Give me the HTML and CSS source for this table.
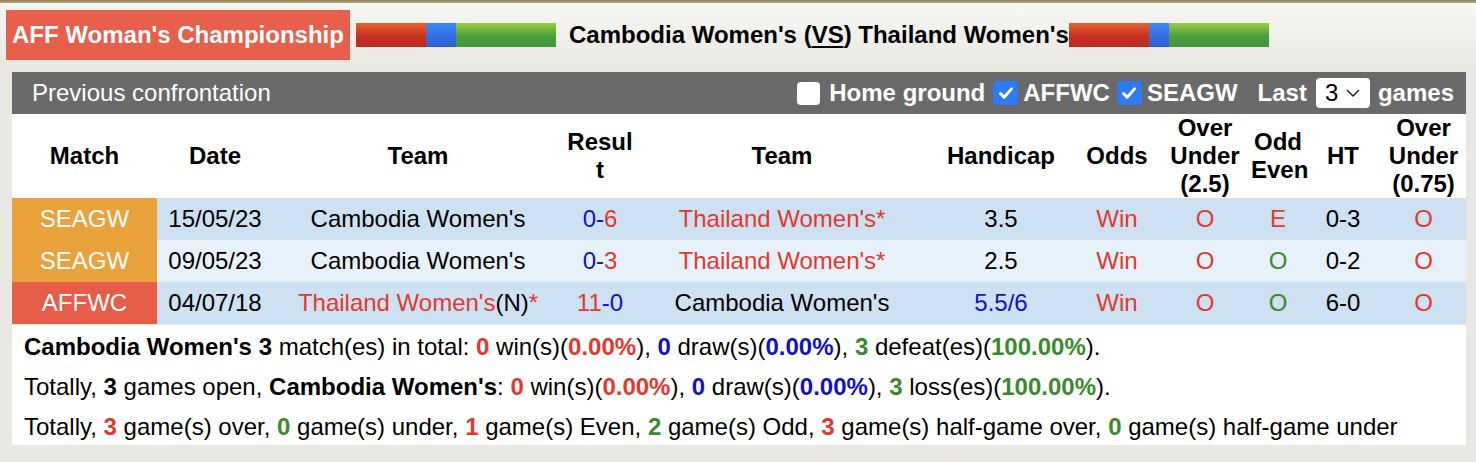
FILE: index.html
```html
<!DOCTYPE html>
<html lang="en">
<head>
<meta charset="utf-8">
<title>Cambodia Women's vs Thailand Women's</title>
<link rel="stylesheet" href="styles.css">
</head>
<body>
<div class="topline"></div>
<div class="title-row">
  <div class="league">AFF Woman's Championship</div>
  <div class="bar"><span class="seg red w70"></span><span class="seg blue w30"></span><span class="seg green w100"></span></div>
  <div class="teams">Cambodia Women's (<u>VS</u>) Thailand Women's</div>
  <div class="bar tight"><span class="seg red w80"></span><span class="seg blue w20"></span><span class="seg green w100"></span></div>
</div>

<div class="panel">
  <div class="panel-head">
    <div class="panel-title">Previous confrontation</div>
    <div class="controls">
      <span class="cb"></span><span class="lbl l-home">Home ground</span>
      <span class="cb on"><svg viewBox="0 0 24 24" width="24" height="24"><path d="M6 12.5l4 4.2L18 7.5" fill="none" stroke="#fff" stroke-width="3.2" stroke-linecap="round" stroke-linejoin="round"/></svg></span><span class="lbl l-aff">AFFWC</span>
      <span class="cb on"><svg viewBox="0 0 24 24" width="24" height="24"><path d="M6 12.5l4 4.2L18 7.5" fill="none" stroke="#fff" stroke-width="3.2" stroke-linecap="round" stroke-linejoin="round"/></svg></span><span class="lbl l-sea">SEAGW</span>
      <span class="lbl l-last">Last</span>
      <span class="select">3<svg viewBox="0 0 14 10" width="14" height="10"><path d="M1 2l6 6 6-6" fill="none" stroke="#222" stroke-width="1.5"/></svg></span>
      <span class="lbl l-games">games</span>
    </div>
  </div>

  <table class="h2h">
    <colgroup>
      <col class="c-match"><col class="c-date"><col class="c-team"><col class="c-res"><col class="c-team"><col class="c-hcp"><col class="c-odds"><col class="c-ou"><col class="c-oe"><col class="c-ht"><col class="c-ou2">
    </colgroup>
    <thead>
      <tr>
        <th>Match</th><th>Date</th><th>Team</th><th><span class="brk">Result</span></th><th>Team</th><th>Handicap</th><th>Odds</th><th>Over Under (2.5)</th><th>Odd Even</th><th>HT</th><th>Over Under (0.75)</th>
      </tr>
    </thead>
    <tbody>
      <tr class="r1">
        <td class="lg sea">SEAGW</td><td>15/05/23</td><td>Cambodia Women's</td><td class="b"><span>0-</span><span class="r">6</span></td><td class="r">Thailand Women's*</td><td>3.5</td><td class="r">Win</td><td class="r">O</td><td class="r">E</td><td>0-3</td><td class="r">O</td>
      </tr>
      <tr class="r2">
        <td class="lg sea">SEAGW</td><td>09/05/23</td><td>Cambodia Women's</td><td class="b"><span>0-</span><span class="r">3</span></td><td class="r">Thailand Women's*</td><td>2.5</td><td class="r">Win</td><td class="r">O</td><td class="g">O</td><td>0-2</td><td class="r">O</td>
      </tr>
      <tr class="r1">
        <td class="lg aff">AFFWC</td><td>04/07/18</td><td><span class="r">Thailand Women's</span>(N)<span class="r">*</span></td><td class="b"><span class="r">11</span>-0</td><td>Cambodia Women's</td><td class="b">5.5/6</td><td class="r">Win</td><td class="r">O</td><td class="g">O</td><td>6-0</td><td class="r">O</td>
      </tr>
    </tbody>
  </table>

  <div class="summary">
    <p><b>Cambodia Women's 3</b> match(es) in total: <b class="r">0</b> win(s)(<b class="r">0.00%</b>), <b class="b">0</b> draw(s)(<b class="b">0.00%</b>), <b class="g">3</b> defeat(es)(<b class="g">100.00%</b>).</p>
    <p>Totally, <b>3</b> games open, <b>Cambodia Women's</b>: <b class="r">0</b> win(s)(<b class="r">0.00%</b>), <b class="b">0</b> draw(s)(<b class="b">0.00%</b>), <b class="g">3</b> loss(es)(<b class="g">100.00%</b>).</p>
    <p>Totally, <b class="r">3</b> game(s) over, <b class="g">0</b> game(s) under, <b class="r">1</b> game(s) Even, <b class="g">2</b> game(s) Odd, <b class="r">3</b> game(s) half-game over, <b class="g">0</b> game(s) half-game under</p>
  </div>
</div>
</body>
</html>
```

FILE: styles.css
```css
html, body {
  margin: 0;
  padding: 0;
}
body {
  background: #e9e8e3;
  font-family: "Liberation Sans", Arial, Helvetica, sans-serif;
  color: #000;
  width: 1476px;
  height: 462px;
  overflow: hidden;
}
.topline {
  height: 3px;
  background: linear-gradient(#8f8157, #b3a67c);
}
.title-row {
  display: flex;
  align-items: center;
  padding: 7px 0 0 6px;
  height: 50px;
  background: linear-gradient(#f7f7f4, #eae9e4);
}
.league {
  box-sizing: border-box;
  width: 344px;
  height: 50px;
  line-height: 50px;
  padding-left: 6px;
  background: #e85f4c;
  color: #fff;
  font-weight: bold;
  font-size: 24px;
  white-space: nowrap;
}
.bar {
  display: flex;
  height: 24px;
  margin-left: 6px;
}
.bar.tight { margin-left: 0; }
.seg { display: block; height: 24px; }
.seg.red { background: linear-gradient(#e2622f, #c7301f 55%, #bf271d); }
.seg.blue { background: linear-gradient(#3e86f2, #2b5ed6); }
.seg.green { background: linear-gradient(#9dcb45, #4a9e3c 55%, #40983a); }
.w20 { width: 20px; } .w30 { width: 30px; } .w70 { width: 70px; } .w80 { width: 80px; } .w100 { width: 100px; }
.teams {
  margin-left: 13px;
  font-weight: bold;
  font-size: 24px;
  white-space: nowrap;
}
.teams u { text-decoration-thickness: 2px; text-underline-offset: 3px; }

.panel {
  margin: 12px 10px 0 12px;
  width: 1454px;
}
.panel-head {
  height: 42px;
  background: #6a6a6a;
  display: flex;
  align-items: center;
  justify-content: space-between;
  padding: 0 12px 0 20px;
  color: #fff;
  font-size: 24px;
}
.controls {
  display: flex;
  align-items: center;
  font-weight: bold;
}
.cb {
  box-sizing: border-box;
  width: 23px;
  height: 23px;
  border-radius: 4px;
  background: #fff;
  display: inline-flex;
  align-items: center;
  justify-content: center;
  margin-right: 9px;
}
.cb.on { background: #2f7bf5; margin-right: 5px; width: 25px; height: 24px; }
.cb svg { width: 22px; height: 22px; }
.lbl { white-space: nowrap; }
.l-home { margin-right: 8px; }
.l-aff { margin-right: 7px; }
.l-sea { margin-right: 20px; }
.l-last { margin-right: 9px; }
.select {
  box-sizing: border-box;
  width: 54px;
  height: 30px;
  background: #fff;
  border-radius: 4px;
  color: #000;
  font-weight: normal;
  display: inline-flex;
  align-items: center;
  padding-left: 9px;
  gap: 8px;
  margin-right: 8px;
}

.h2h {
  width: 1454px;
  border-collapse: collapse;
  table-layout: fixed;
  font-size: 24px;
}
.c-match { width: 145px; }
.c-date { width: 116px; }
.c-team { width: 290px; }
.c-res { width: 74px; }
.c-hcp { width: 148px; }
.c-odds { width: 84px; }
.c-ou { width: 92px; }
.c-oe { width: 54px; }
.c-ht { width: 76px; }
.c-ou2 { width: 85px; }
.h2h th {
  background: #fff;
  height: 84px;
  padding: 0;
  font-weight: bold;
  line-height: 28px;
  text-align: center;
  vertical-align: middle;
}
.brk {
  display: inline-block;
  width: 68px;
  word-break: break-all;
}
.h2h td {
  height: 42px;
  padding: 0;
  text-align: center;
  vertical-align: middle;
  white-space: nowrap;
}
.r1 td { background: #cde1f2; }
.r2 td { background: #e7f1fa; }
.h2h td.lg { color: #fff; }
.h2h td.sea { background: #e9a23c; }
.h2h td.aff { background: #e65d4a; }
.r { color: #e2392e; }
.b { color: #1212c4; }
.g { color: #3a8a2c; }

.summary {
  background: #fff;
  border-top: 1px solid #e4e6e8;
  padding: 2px 12px 0;
  height: 121px;
  box-sizing: border-box;
  font-size: 24px;
}
.summary p {
  margin: 0;
  line-height: 40px;
  white-space: nowrap;
}
```
